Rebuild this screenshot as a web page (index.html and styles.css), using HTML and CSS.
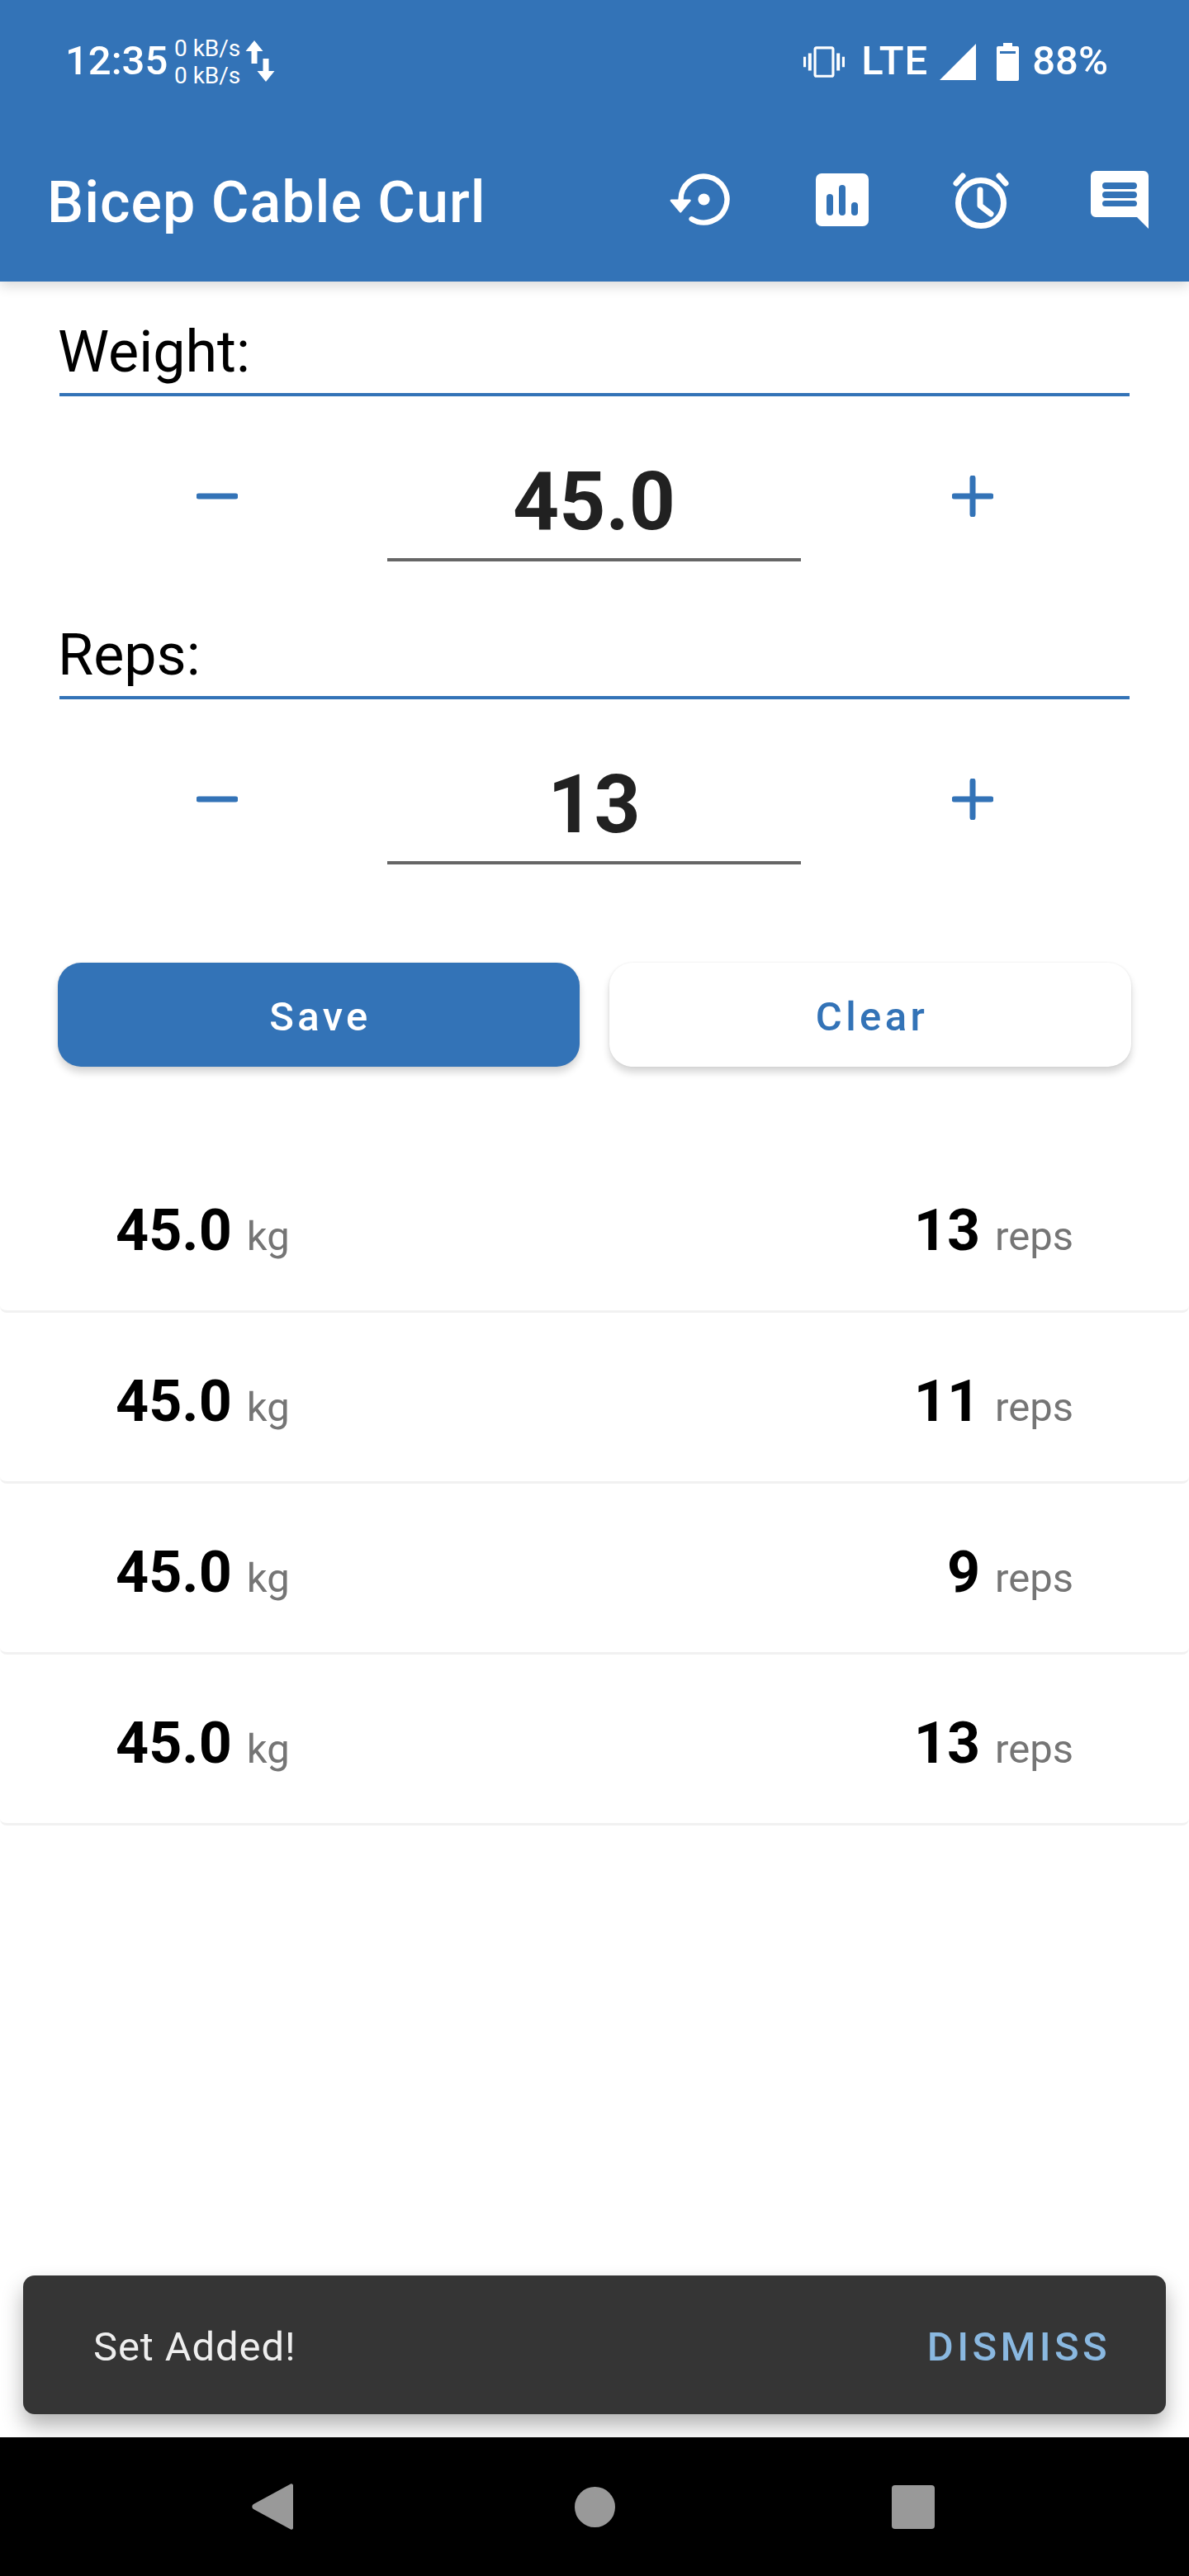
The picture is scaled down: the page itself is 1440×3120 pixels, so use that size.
FILE: index.html
```html
<!DOCTYPE html>
<html lang="en">
<head>
    <meta charset="UTF-8">
    <meta name="viewport" content="width=device-width, initial-scale=1.0">
    <title>Bicep Cable Curl</title>
    <link rel="stylesheet" href="styles.css">
</head>
<body>
<div class="screen">

    <!-- Blue header: status bar and toolbar -->
    <header class="app-header">
        <div class="status-bar">
            <span class="status-time">12:35</span>
            <span class="net-speed"><span>0 kB/s</span><span>0 kB/s</span></span>
            <svg class="net-arrows" viewBox="0 0 36 50" width="36" height="50">
                <path d="M11 0l10.500 13H14.500v15h-7V13H.500z"/>
                <path d="M25 50L14.500 37H21.500V22h7v15H35.500z"/>
            </svg>
            <div class="status-right">
                <svg class="status-vibrate" viewBox="0 0 24 24" width="50" height="50">
                    <path d="M0 15h1.500V9H0v6zm2.800 2h1.900V7H2.800v10zm19.700-8v6H24V9h-1.500zm-3.200 8h1.900V7h-1.900v10zM16.500 3h-9C6.670 3 6 3.670 6 4.500v15c0 .83.67 1.500 1.500 1.500h9c.83 0 1.500-.67 1.500-1.500v-15c0-.83-.67-1.500-1.500-1.500zM16.500 19.500h-9v-15h9v15z"/>
                </svg>
                <span class="status-lte">LTE</span>
                <svg class="status-signal" viewBox="0 0 44 44" width="44" height="44">
                    <path d="M44 0v44H0z"/>
                </svg>
                <svg class="status-battery" viewBox="0 0 27 46" width="27" height="46">
                    <path fill-rule="evenodd" d="M8 0h11v4h6a2 2 0 0 1 2 2v38a2 2 0 0 1-2 2H2a2 2 0 0 1-2-2V6a2 2 0 0 1 2-2h6zM4 10v3h19v-3z"/>
                </svg>
                <span class="status-battery-text">88%</span>
            </div>
        </div>
        <div class="toolbar">
            <h1 class="toolbar-title">Bicep Cable Curl</h1>
            <div class="toolbar-actions">
                <span class="toolbar-icon">
                    <svg viewBox="0 0 24 24" width="85" height="85">
                        <circle cx="12" cy="12" r="2"/>
                        <path d="M3.600 12H.900a.4.4 0 0 0-.3.7l3.100 3.700a.4.4 0 0 0 .6 0l3.100-3.700a.4.4 0 0 0-.3-.7H5.200"/>
                        <path class="icon-line" d="M4.100 12.500V12a7.900 7.900 0 1 1 3.700 6.700"/>
                    </svg>
                </span>
                <span class="toolbar-icon">
                    <svg viewBox="0 0 64 64" width="64" height="64">
                        <rect width="64" height="64" rx="7"/>
                        <rect class="icon-cut" x="13" y="25" width="8" height="26" rx="4"/>
                        <rect class="icon-cut" x="28" y="14" width="8" height="37" rx="4"/>
                        <rect class="icon-cut" x="43" y="35" width="8" height="16" rx="4"/>
                    </svg>
                </span>
                <span class="toolbar-icon">
                    <svg viewBox="0 0 70 70" width="70" height="70">
                        <circle class="icon-line-px" cx="35" cy="39" r="27.500"/>
                        <path class="icon-line-px" d="M34 23v19l13 10"/>
                        <path class="icon-line-px" d="M5 15L13 6M65 15L57 6"/>
                    </svg>
                </span>
                <span class="toolbar-icon">
                    <svg viewBox="0 0 70 70" width="70" height="70">
                        <path d="M6 0h58a6 6 0 0 1 6 6v64L56 56H6a6 6 0 0 1-6-6V6a6 6 0 0 1 6-6z"/>
                        <rect class="icon-cut" x="14" y="14" width="42" height="8" rx="4"/>
                        <rect class="icon-cut" x="14" y="25" width="42" height="8" rx="4"/>
                        <rect class="icon-cut" x="14" y="36" width="42" height="7" rx="3.500"/>
                    </svg>
                </span>
            </div>
        </div>
    </header>

    <main class="content">
        <section class="field">
            <div class="field-label">Weight:</div>
            <div class="stepper">
                <svg class="stepper-btn" viewBox="0 0 50 50" width="50" height="50"><path d="M3 25h44"/></svg>
                <div class="stepper-value">45.0</div>
                <svg class="stepper-btn" viewBox="0 0 50 50" width="50" height="50"><path d="M3 25h44M25 3v44"/></svg>
            </div>
        </section>

        <section class="field">
            <div class="field-label">Reps:</div>
            <div class="stepper">
                <svg class="stepper-btn" viewBox="0 0 50 50" width="50" height="50"><path d="M3 25h44"/></svg>
                <div class="stepper-value">13</div>
                <svg class="stepper-btn" viewBox="0 0 50 50" width="50" height="50"><path d="M3 25h44M25 3v44"/></svg>
            </div>
        </section>

        <div class="actions">
            <button class="btn btn-save" type="button">Save</button>
            <button class="btn btn-clear" type="button">Clear</button>
        </div>

        <ul class="set-list">
            <li class="set-row">
                <span><b class="set-num">45.0</b><span class="set-unit">kg</span></span>
                <span><b class="set-num">13</b><span class="set-unit">reps</span></span>
            </li>
            <li class="set-row">
                <span><b class="set-num">45.0</b><span class="set-unit">kg</span></span>
                <span><b class="set-num">11</b><span class="set-unit">reps</span></span>
            </li>
            <li class="set-row">
                <span><b class="set-num">45.0</b><span class="set-unit">kg</span></span>
                <span><b class="set-num">9</b><span class="set-unit">reps</span></span>
            </li>
            <li class="set-row">
                <span><b class="set-num">45.0</b><span class="set-unit">kg</span></span>
                <span><b class="set-num">13</b><span class="set-unit">reps</span></span>
            </li>
        </ul>
    </main>

    <!-- Snackbar sits over the content -->
    <div class="snackbar">
        <span class="snackbar-text">Set Added!</span>
        <span class="snackbar-action">DISMISS</span>
    </div>

    <nav class="nav-bar">
        <svg class="nav-back" viewBox="0 0 50 56" width="50" height="56"><path d="M50 2v52a2 2 0 0 1-3 1.500L2 31a3.500 3.500 0 0 1 0-6L47 .5A2 2 0 0 1 50 2z"/></svg>
        <svg class="nav-home" viewBox="0 0 49 49" width="49" height="49"><circle cx="24.500" cy="24.500" r="24.500"/></svg>
        <svg class="nav-recent" viewBox="0 0 52 53" width="52" height="53"><rect width="52" height="53" rx="4"/></svg>
    </nav>
</div>
</body>
</html>
```

FILE: styles.css
```css
/* General */
* {
    box-sizing: border-box;
}

body {
    margin: 0;
    background-color: #fff;
    font-family: Roboto, "Liberation Sans", sans-serif;
}

.screen {
    position: relative;
    display: flex;
    flex-direction: column;
    width: 1440px;
    height: 3120px;
    overflow: hidden;
    background-color: #fff;
}

/* Header */
.app-header {
    position: relative;
    z-index: 1;
    flex: none;
    height: 341px;
    background-color: #3373b7;
    color: #fff;
    box-shadow: 0 6px 14px rgba(0, 0, 0, 0.14);
}

.app-header svg {
    fill: #fff;
    display: block;
}

.status-bar {
    display: flex;
    align-items: center;
    height: 150px;
    padding: 0 98px 0 79px;
}

.status-time {
    width: 132px;
    margin-top: -3px;
    font-size: 49px;
    font-weight: 500;
    line-height: 1;
}

.net-speed {
    display: flex;
    flex-direction: column;
    width: 86px;
    font-size: 28px;
    line-height: 33px;
}

.net-arrows {
    margin-top: -2px;
    width: 36px;
}

.status-right {
    display: flex;
    align-items: center;
    margin-left: auto;
}

.status-lte {
    margin: -3px 0 0 20px;
    font-size: 49px;
    font-weight: 500;
    letter-spacing: 1px;
    line-height: 1;
}

.status-signal {
    margin-left: 14px;
}

.status-battery {
    margin-left: 25px;
}

.status-battery-text {
    margin: -3px 0 0 16px;
    font-size: 49px;
    font-weight: 500;
    line-height: 1;
}

.toolbar {
    display: flex;
    align-items: center;
    height: 191px;
    padding-left: 57px;
}

.toolbar-title {
    flex: 1;
    margin: 0;
    margin-top: -2px;
    font-size: 70px;
    font-weight: 500;
    letter-spacing: 1px;
}

.toolbar-actions {
    display: flex;
}

.toolbar-icon {
    display: flex;
    justify-content: center;
    align-items: center;
    width: 168px;
    height: 168px;
    margin-top: -8px;
}

.icon-cut {
    fill: #3373b7;
}

.app-header .icon-line {
    fill: none;
    stroke: #fff;
    stroke-width: 1.800;
    stroke-linecap: round;
}

.app-header .icon-line-px {
    fill: none;
    stroke: #fff;
    stroke-width: 7;
    stroke-linecap: round;
    stroke-linejoin: round;
}

/* Form */
.content {
    flex: 1;
}

.field-label {
    height: 139px;
    margin: 0 72px;
    padding-top: 44px;
    border-bottom: 4px solid #3373b7;
    font-size: 70px;
    line-height: 82px;
    text-indent: -2px;
    color: #000;
}

.stepper {
    display: flex;
    align-items: center;
    height: 228px;
    padding-left: 238px;
}

.stepper-btn {
    flex: none;
    margin-top: 14px;
    fill: none;
    stroke: #3373b7;
    stroke-width: 7;
    stroke-linecap: round;
}

.stepper-value {
    flex: none;
    width: 501px;
    height: 146px;
    margin: 25px 183px 0 181px;
    padding-top: 16px;
    border-bottom: 4px solid #666;
    font-size: 98px;
    font-weight: 700;
    line-height: 115px;
    text-align: center;
    color: #212121;
}

/* Buttons */
.actions {
    display: flex;
    gap: 36px;
    margin: 91px 70px 0;
}

.btn {
    flex: 1;
    height: 126px;
    padding: 4px 0 0 4px;
    border: none;
    border-radius: 28px;
    font-family: inherit;
    font-size: 49px;
    font-weight: 500;
    letter-spacing: 4.370px;
    box-shadow: 0 7px 10px rgba(0, 0, 0, 0.16), 0 0 3px rgba(0, 0, 0, 0.08);
}

.btn-save {
    background-color: #3373b7;
    color: #fff;
}

.btn-clear {
    background-color: #fff;
    color: #3373b7;
}

/* Saved sets */
.set-list {
    margin: 91px 0 0;
    padding: 0;
    list-style: none;
}

.set-row {
    display: flex;
    justify-content: space-between;
    align-items: baseline;
    height: 207px;
    padding: 66px 140px 0 140px;
    border-bottom: 3px solid #f1f1f1;
    border-radius: 0 0 8px 8px;
    line-height: 82px;
}

.set-num {
    font-size: 70px;
    font-weight: 700;
    color: #000;
}

.set-unit {
    margin-left: 18px;
    font-size: 49px;
    color: #757575;
}

/* Snackbar */
.snackbar {
    position: absolute;
    left: 28px;
    right: 28px;
    top: 2756px;
    display: flex;
    justify-content: space-between;
    align-items: center;
    height: 168px;
    padding: 4px 67px 0 85px;
    border-radius: 14px;
    background-color: #353535;
    font-size: 49px;
    box-shadow: 0 14px 26px rgba(0, 0, 0, 0.3);
}

.snackbar-text {
    letter-spacing: 0.870px;
    color: #eee;
}

.snackbar-action {
    font-weight: 500;
    letter-spacing: 4.370px;
    color: #8ab8e0;
}

/* Android nav bar */
.nav-bar {
    position: relative;
    z-index: 1;
    flex: none;
    display: flex;
    align-items: center;
    height: 168px;
    padding-left: 305px;
    background-color: #000;
}

.nav-bar svg {
    fill: #999;
    display: block;
}

.nav-home {
    margin-left: 341px;
}

.nav-recent {
    margin-left: 335px;
}
```
